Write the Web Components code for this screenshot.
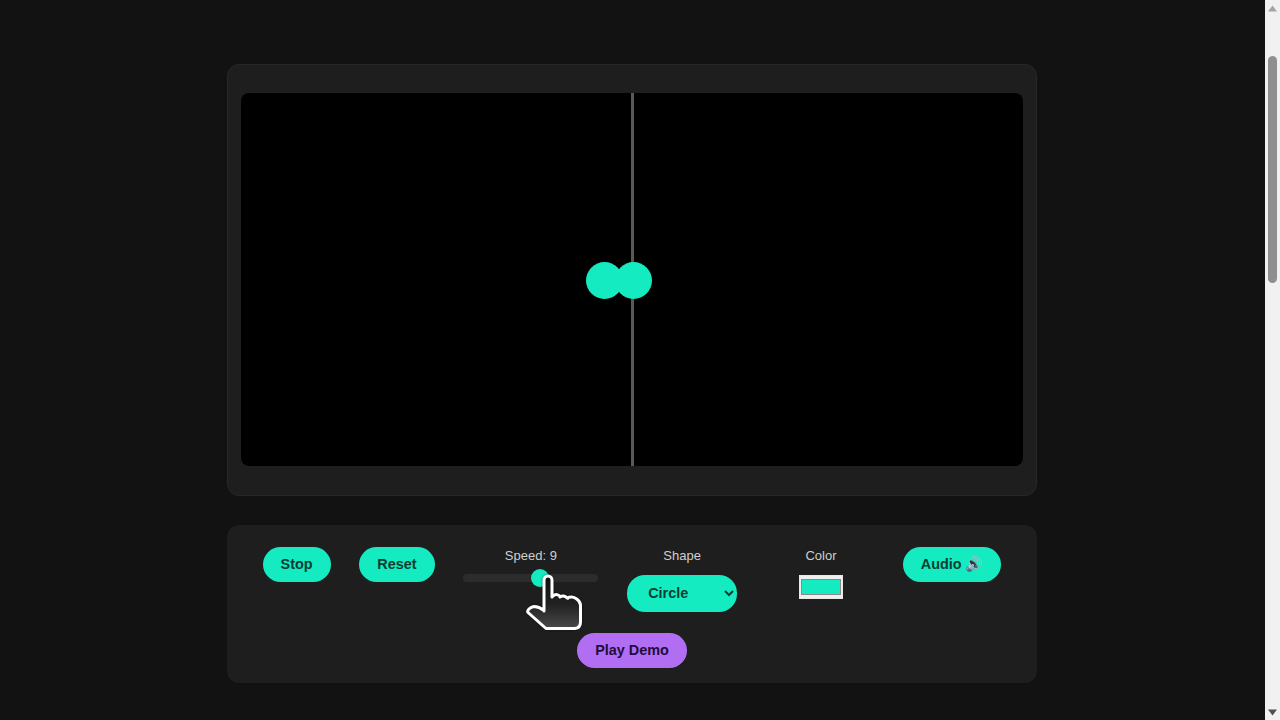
<!DOCTYPE html>
<html lang="en"><head><meta charset="utf-8"><title>Bounce</title>
<style>html,body{margin:0;height:100%;overflow:hidden;background:#121212;font-family:"Liberation Sans",Arial,sans-serif}</style>
</head><body>
<app-shell>
  <stage-panel></stage-panel>
  <control-panel>
    <pill-button>Stop</pill-button>
    <pill-button>Reset</pill-button>
    <control-group label="Speed: 9" style="width:135px"><speed-slider></speed-slider></control-group>
    <control-group label="Shape" style="width:110px"><shape-select></shape-select></control-group>
    <control-group label="Color" style="width:108px;padding-left:2px;box-sizing:border-box"><color-well></color-well></control-group>
    <pill-button variant="emoji">Audio 🔊</pill-button>
    <pill-button variant="purple" class="demo">Play Demo</pill-button>
  </control-panel>
</app-shell>
<script>
const TEAL='#14ebc0';
function def(name,html,init){customElements.define(name,class extends HTMLElement{
  constructor(){super();this.attachShadow({mode:'open'}).innerHTML=html;}
  connectedCallback(){if(init)init(this);}
});}
def('app-shell',`<style>
:host{display:flex;height:100vh;width:100%}
main{flex:1;min-width:0;display:flex;flex-direction:column;align-items:center;gap:29px;padding:64px 1px 0 0;box-sizing:border-box}
</style><main><slot></slot></main><app-scrollbar></app-scrollbar>`);
def('app-scrollbar',`<style>
:host{display:flex;flex-direction:column;align-items:center;width:15px;flex:none;background:#f1f1f1;box-sizing:border-box}
svg{display:block;flex:none}
.track{flex:1;width:100%;display:block;padding:41px 3px 0;box-sizing:border-box}
.thumb{height:227px;border-radius:5px;background:#8f8f8f}
</style><svg width="15" height="15" viewBox="0 0 15 15"><path d="M7.5 5.5L12 11.5H3z" fill="#a3a3a3"/></svg>
<div class="track"><div class="thumb"></div></div>
<svg width="15" height="15" viewBox="0 0 15 15"><path d="M7.5 10.5L12 4.5H3z" fill="#505050"/></svg>`);
def('stage-panel',`<style>
:host{display:block;width:810px;height:432px;box-sizing:border-box;padding:28px 13px 0;background:#1e1e1e;border:1px solid #272727;border-radius:12px}
.canvas{position:relative;height:373px;background:#000;border-radius:8px;overflow:hidden}
.line{position:absolute;left:390px;top:0;bottom:0;width:3px;background:#585858}
.ball{position:absolute;top:168.5px;width:37px;height:37px;border-radius:50%;background:${TEAL};filter:blur(.6px)}
</style><div class="canvas"><div class="line"></div><div class="ball" style="left:345px"></div><div class="ball" style="left:374px"></div></div>`);
def('control-panel',`<style>
:host{display:block;position:relative;width:810px;height:158px;box-sizing:border-box;background:#1e1e1e;border-radius:12px}
.row{display:flex;flex-wrap:wrap;justify-content:center;align-items:flex-start;gap:21px 28.8px;padding:22px 0 0}
hand-cursor{position:absolute;left:293px;top:40px}
</style><div class="row"><slot></slot></div><hand-cursor></hand-cursor>`);
def('pill-button',`<style>
:host{display:block;flex:none}
:host(.demo){flex-basis:100%;display:flex;justify-content:center}
button{display:block;height:35px;padding:0 18px 2px;box-sizing:border-box;border:0;border-radius:18px;background:${TEAL};color:#0b3d34;font:bold 14.4px "Liberation Sans",Arial,"Noto Color Emoji",sans-serif;white-space:nowrap}
:host([variant=emoji]) button{padding-bottom:0}
:host([variant=purple]) button{background:#b26ef2;color:#1e0b40;padding-bottom:1px}
</style><button><slot></slot></button>`);
def('control-group',`<style>
:host{display:flex;flex-direction:column;align-items:center;gap:10px;flex:none}
.l{font:13px/18px "Liberation Sans",Arial,sans-serif;color:#cfcfcf}
</style><span class="l"></span><slot></slot>`,el=>{el.shadowRoot.querySelector('.l').textContent=el.getAttribute('label');});
def('speed-slider',`<style>
:host{display:block;width:135px;height:8px;margin-top:-1px}
input{-webkit-appearance:none;appearance:none;display:block;width:135px;height:8px;margin:0;background:#2c2c2c;border-radius:4px;outline:0}
input::-webkit-slider-thumb{-webkit-appearance:none;width:18px;height:18px;border-radius:50%;background:${TEAL};border:0}
</style><input type="range" min="0" max="15.5" step="any" value="9" aria-label="Speed">`);
def('shape-select',`<style>
:host{display:block}
select{display:block;width:110px;height:37px;padding:0 0 2px 17px;box-sizing:border-box;border:0;border-radius:18px;background-color:${TEAL};color:#0b3d34;font:bold 14.4px "Liberation Sans",Arial,sans-serif}
</style><select aria-label="Shape"><option>Circle</option><option>Square</option></select>`);
def('color-well',`<style>
:host{display:block}
input{display:block;width:44px;height:24px;box-sizing:border-box;margin:0;padding:0;border:1px solid #e8e8e8;background:#efefef;-webkit-appearance:none;appearance:none}
input::-webkit-color-swatch-wrapper{padding:3px 1px}
input::-webkit-color-swatch{border:1px solid #8a8a8a}
</style><input type="color" value="#14ebc0" aria-label="Color">`);
def('hand-cursor',`<style>:host{display:block;width:70px;height:70px;pointer-events:none}svg{display:block;filter:drop-shadow(0 0 1px #0008)}</style>
<svg width="70" height="70" viewBox="520 565 70 70"><defs><linearGradient id="g" x1="0" y1="0" x2="0" y2="1"><stop offset="0" stop-color="#0e0e0e"/><stop offset=".55" stop-color="#222"/><stop offset="1" stop-color="#4a4a4a"/></linearGradient></defs>
<path d="M544 611V580a4 4 0 0 1 8 0V597q3-3.500 6-2t2 2q3-2 6 0t1 1q5-2 9 0.500t4.500 6.500V622q0 6-5.500 6.500H546L528 612.500q-1-1.500 1-3.500t5-2.500q5 0 10 4z" fill="url(#g)" stroke="#fff" stroke-width="3" stroke-linejoin="round"/></svg>`);
</script>
</body></html>
